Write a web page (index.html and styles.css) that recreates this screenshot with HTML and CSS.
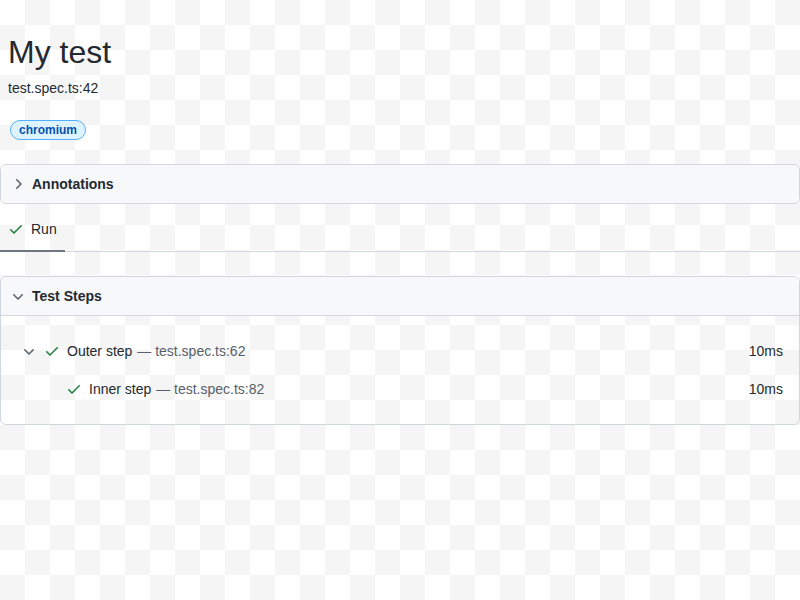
FILE: index.html
```html
<!DOCTYPE html>
<html lang="en">
<head>
    <meta charset="UTF-8">
    <meta name="viewport" content="width=device-width, initial-scale=1.0">
    <title>My test</title>
    <link rel="stylesheet" href="styles.css">
</head>
<body>
    <div class="test-header">
        <h1 class="test-title">My test</h1>
        <div class="test-location">test.spec.ts:42</div>
        <div class="labels">
            <span class="label label-blue">chromium</span>
        </div>
    </div>

    <div class="chip">
        <div class="chip-header">
            <svg class="icon chevron" viewBox="0 0 16 16" width="16" height="16"><path d="M6.22 3.22a.75.75 0 011.06 0l4.25 4.25a.75.75 0 010 1.06l-4.25 4.25a.75.75 0 01-1.06-1.06L9.94 8 6.22 4.28a.75.75 0 010-1.060z"/></svg>
            <span>Annotations</span>
        </div>
    </div>

    <div class="tabbar">
        <div class="tab selected">
            <svg class="icon check" viewBox="0 0 16 16" width="16" height="16"><path d="M13.78 4.22a.75.75 0 010 1.06l-7.25 7.25a.75.75 0 01-1.06 0L2.22 9.28a.75.75 0 011.06-1.06L6 10.94l6.72-6.72a.75.75 0 011.06 0z"/></svg>
            <span>Run</span>
        </div>
    </div>

    <div class="chip steps">
        <div class="chip-header with-body">
            <svg class="icon chevron" viewBox="0 0 16 16" width="16" height="16"><path d="M12.78 6.22a.75.75 0 010 1.06l-4.25 4.25a.75.75 0 01-1.06 0L3.22 7.28a.75.75 0 011.06-1.06L8 9.94l3.72-3.72a.75.75 0 011.06 0z"/></svg>
            <span>Test Steps</span>
        </div>
        <div class="chip-body">
            <div class="step-row depth-0">
                <svg class="icon chevron" viewBox="0 0 16 16" width="16" height="16"><path d="M12.78 6.22a.75.75 0 010 1.06l-4.25 4.25a.75.75 0 01-1.06 0L3.22 7.28a.75.75 0 011.06-1.06L8 9.94l3.72-3.72a.75.75 0 011.06 0z"/></svg>
                <svg class="icon check" viewBox="0 0 16 16" width="16" height="16"><path d="M13.78 4.22a.75.75 0 010 1.06l-7.25 7.25a.75.75 0 01-1.06 0L2.22 9.28a.75.75 0 011.06-1.06L6 10.94l6.72-6.72a.75.75 0 011.06 0z"/></svg>
                <span class="step-title">Outer step <span class="step-location">— test.spec.ts:62</span></span>
                <span class="step-duration">10ms</span>
            </div>
            <div class="step-row depth-1">
                <svg class="icon check" viewBox="0 0 16 16" width="16" height="16"><path d="M13.78 4.22a.75.75 0 010 1.06l-7.25 7.25a.75.75 0 01-1.06 0L2.22 9.28a.75.75 0 011.06-1.06L6 10.94l6.72-6.72a.75.75 0 011.06 0z"/></svg>
                <span class="step-title">Inner step <span class="step-location">— test.spec.ts:82</span></span>
                <span class="step-duration">10ms</span>
            </div>
        </div>
    </div>
</body>
</html>
```

FILE: styles.css
```css
html {
    min-height: 100%;
    background-color: #fff;
    background-image: conic-gradient(#f5f5f5 25%, #fff 0 50%, #f5f5f5 0 75%, #fff 0);
    background-size: 50px 50px;
    background-position: 0 0;
}
body {
    margin: 0;
    font-family: "Liberation Sans", Arial, sans-serif;
    font-size: 14px;
    color: #24292f;
}
.test-header {
    padding: 0 8px;
}
.test-title {
    margin: 34px 0 10px;
    font-size: 32px;
    font-weight: 400;
    line-height: 36px;
}
.test-location {
    line-height: 16px;
    margin-bottom: 24px;
}
.labels {
    padding-left: 2px;
    display: flex;
}
.label {
    display: inline-block;
    padding: 0 8px;
    font-size: 12px;
    font-weight: bold;
    line-height: 18px;
    border-radius: 10px;
    border: 1px solid;
}
.label-blue {
    color: #0550ae;
    background-color: #ddf4ff;
    border-color: #54aeff;
}
.icon {
    flex: none;
    fill: currentColor;
}
.chevron {
    color: #57606a;
}
.check {
    color: #1a7f37;
}
.chip {
    margin-top: 24px;
    border: 1px solid #d0d7de;
    border-radius: 6px;
    overflow: hidden;
}
.chip-header {
    display: flex;
    align-items: center;
    gap: 6px;
    padding: 10px 9px;
    line-height: 18px;
    font-weight: bold;
    background-color: #f6f8fa;
}
.chip-header.with-body {
    border-bottom: 1px solid #d0d7de;
}
.tabbar {
    display: flex;
    border-bottom: 1px solid #d0d7de;
}
.tab {
    display: flex;
    align-items: center;
    gap: 7px;
    padding: 17px 8px 13px;
    line-height: 16px;
    margin-bottom: -1px;
    border-bottom: 2px solid #6e7781;
}
.steps {
    margin-top: 24px;
}
.chip-body {
    padding: 16px 0;
}
.step-row {
    display: flex;
    align-items: center;
    height: 38px;
    padding-right: 16px;
}
.step-row.depth-0 {
    padding-left: 20px;
}
.step-row.depth-0 .check {
    margin-left: 7px;
}
.step-row.depth-1 {
    padding-left: 65px;
}
.step-title {
    margin-left: 7px;
    flex: 1;
}
.step-location {
    margin-left: 1px;
    color: #57606a;
}
```
